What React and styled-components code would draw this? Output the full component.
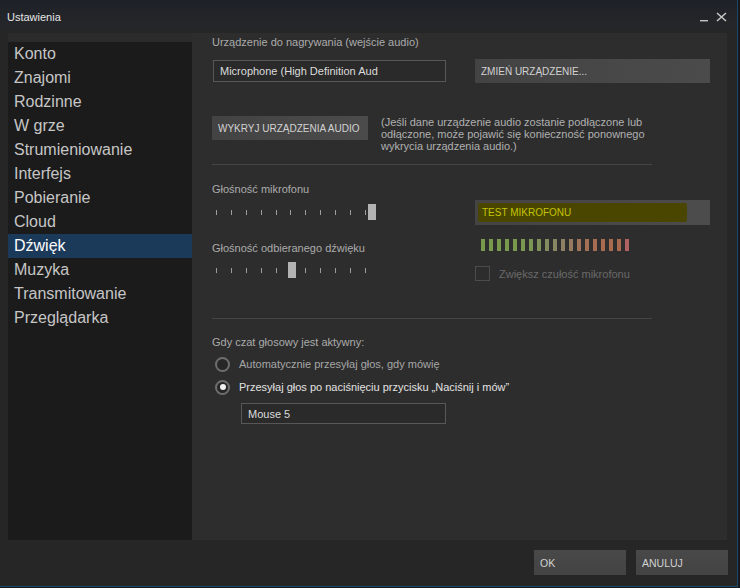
import React from "react";
import styled, { createGlobalStyle } from "styled-components";

const Global = createGlobalStyle`
  html, body { margin: 0; padding: 0; background: #15181d; }
  body { font-family: "Liberation Sans", Arial, sans-serif; }
`;

const Window = styled.div`
  width: 737px;
  height: 586px;
  background: #262626;
  border-right: 1px solid #1f4766;
  border-bottom: 1px solid #1f4766;
  display: flex;
  flex-direction: column;
`;

const TitleBar = styled.div`
  height: 33px;
  flex: none;
  display: flex;
  align-items: center;
  padding: 0 10px 0 7px;
  background: linear-gradient(#1e2127, #24262a 70%, #262626);
  color: #e6e6e6;
  font-size: 11px;
`;

const Title = styled.div`
  flex: 1;
`;

const Controls = styled.div`
  display: flex;
  align-items: flex-end;
  gap: 7px;
`;

const Body = styled.div`
  height: 507px;
  flex: none;
  display: flex;
  padding: 0 10px 0 8px;
`;

const Nav = styled.div`
  width: 184px;
  flex: none;
  background: #1b1b1b;
  border-top: 9px solid #2b2b2b;
`;

const NavItem = styled.div`
  height: 24px;
  line-height: 24px;
  padding-left: 6px;
  font-size: 16px;
  color: ${(p) => (p.$active ? "#ffffff" : "#c6c6c6")};
  background: ${(p) => (p.$active ? "#1b3a5a" : "transparent")};
`;

const Content = styled.div`
  flex: 1;
  background: #2d2d2d;
  padding: 2px 0 0 20px;
  color: #ababab;
  font-size: 11px;
`;

const Label = styled.div`
  line-height: 14px;
  margin-top: ${(p) => p.$mt || 0}px;
  color: ${(p) => p.$color || "#ababab"};
`;

const TwoCols = styled.div`
  display: grid;
  grid-template-columns: 263px 235px;
  align-items: ${(p) => p.$align || "center"};
  margin-top: ${(p) => p.$mt || 0}px;
`;

const TextBox = styled.div`
  box-sizing: border-box;
  width: ${(p) => p.$w}px;
  height: ${(p) => p.$h || 22}px;
  margin-left: ${(p) => p.$ml || 0}px;
  margin-top: ${(p) => p.$mt || 0}px;
  border: 1px solid #575757;
  background: #2a2a2a;
  color: #dcdcdc;
  font-size: 11px;
  display: flex;
  align-items: center;
  padding-left: 6px;
  white-space: nowrap;
  overflow: hidden;
`;

const Button = styled.div`
  box-sizing: border-box;
  width: ${(p) => p.$w}px;
  height: ${(p) => p.$h || 24}px;
  background: linear-gradient(to right, #434343, #4b4b4b);
  color: #d2d2d2;
  font-size: 10px;
  display: flex;
  align-items: center;
  padding-left: 6px;
  white-space: nowrap;
  flex: none;
`;

const DetectRow = styled.div`
  display: flex;
  align-items: flex-start;
  margin-top: 33px;
`;

const Note = styled.div`
  margin-left: 13px;
  width: 300px;
  line-height: 12px;
  color: #b0b0b0;
`;

const Divider = styled.div`
  width: 440px;
  height: 1px;
  background: #444444;
  margin-top: ${(p) => p.$mt}px;
`;

const Column = styled.div`
  display: flex;
  flex-direction: column;
  padding-top: ${(p) => p.$pt || 0}px;
`;

const SliderWrap = styled.div`
  position: relative;
  width: 170px;
  height: 16px;
  margin-top: ${(p) => p.$mt || 0}px;
  display: flex;
  align-items: center;
`;

const Ticks = styled.div`
  margin-left: 4px;
  width: 150px;
  display: flex;
  justify-content: space-between;
  align-items: center;
`;

const Tick = styled.div`
  width: 1px;
  height: 5px;
  background: #9c9c9c;
`;

const Handle = styled.div`
  position: absolute;
  top: 0;
  width: 8px;
  height: 16px;
  background: #b3b3b3;
`;

const TestButton = styled(Button)`
  height: 25px;
  padding-left: 3px;
  background: linear-gradient(to right, #444444, #4c4c4c);
`;

const Highlight = styled.span`
  display: flex;
  align-items: center;
  width: 209px;
  height: 19px;
  padding-left: 4px;
  box-sizing: border-box;
  background: #4a4600;
  color: #c4c300;
  border-radius: 2px;
`;

const Meter = styled.div`
  display: flex;
  gap: 4px;
  margin: 14px 0 0 6px;
`;

const Bar = styled.div`
  width: 4px;
  height: 12px;
  background: ${(p) => p.$c};
`;

const CheckRow = styled.div`
  display: flex;
  align-items: center;
  margin-top: 15px;
  color: #6a6a6a;
`;

const CheckBox = styled.div`
  box-sizing: border-box;
  width: 15px;
  height: 15px;
  border: 1px solid #4c4c4c;
  margin-right: 9px;
`;

const RadioRow = styled.div`
  display: flex;
  align-items: center;
  height: 16px;
  margin-top: 7px;
  padding-left: 3px;
  color: ${(p) => (p.$on ? "#e2e2e2" : "#a6a6a6")};
`;

const Radio = styled.div`
  box-sizing: border-box;
  width: 15px;
  height: 15px;
  border-radius: 50%;
  border: 2px solid #6e6e6e;
  background: #272727;
  margin-right: 9px;
  display: flex;
  align-items: center;
  justify-content: center;
  &::after {
    content: "";
    display: ${(p) => (p.$on ? "block" : "none")};
    width: 6px;
    height: 6px;
    border-radius: 50%;
    background: #f2f2f2;
  }
`;

const Footer = styled.div`
  flex: 1;
  display: flex;
  justify-content: flex-end;
  gap: 10px;
  padding: 10px 9px 0 0;
`;

const FooterButton = styled(Button)`
  height: 25px;
  font-size: 10.5px;
  padding-left: 6px;
  background: linear-gradient(#494949, #434343);
`;

const navItems = [
  "Konto", "Znajomi", "Rodzinne", "W grze", "Strumieniowanie", "Interfejs",
  "Pobieranie", "Cloud", "Dźwięk", "Muzyka", "Transmitowanie", "Przeglądarka",
];

const meterColors = [
  "#799a4c", "#799a4c", "#799a4c", "#799a4c", "#799a4c", "#7a984f", "#7c9553",
  "#7f9158", "#838c5e", "#878663", "#8d8064", "#967a60", "#9e735a", "#a37056",
  "#a66d52", "#a86b4f", "#a96a4e", "#aa694e", "#b06262",
];

function Slider({ value, mt }) {
  return (
    <SliderWrap $mt={mt}>
      <Ticks>
        {Array.from({ length: 11 }).map((_, i) => (
          <Tick key={i} />
        ))}
      </Ticks>
      <Handle style={{ left: value }} />
    </SliderWrap>
  );
}

export default function App() {
  return (
    <>
      <Global />
      <Window>
        <TitleBar>
          <Title>Ustawienia</Title>
          <Controls>
            <svg width="9" height="10" viewBox="0 0 9 10">
              <rect x="0" y="8" width="8" height="1.4" fill="#c4c4c4" />
            </svg>
            <svg width="11" height="10" viewBox="0 0 11 10">
              <path d="M1 1 L10 9 M10 1 L1 9" stroke="#c8c8c8" strokeWidth="1.5" fill="none" />
            </svg>
          </Controls>
        </TitleBar>
        <Body>
          <Nav>
            {navItems.map((n) => (
              <NavItem key={n} $active={n === "Dźwięk"}>{n}</NavItem>
            ))}
          </Nav>
          <Content>
            <Label>Urządzenie do nagrywania (wejście audio)</Label>
            <TwoCols $mt={10}>
              <TextBox $w={233} $ml={1}>Microphone (High Definition Aud</TextBox>
              <Button $w={235}>ZMIEŃ URZĄDZENIE...</Button>
            </TwoCols>
            <DetectRow>
              <Button $w={156}>WYKRYJ URZĄDZENIA AUDIO</Button>
              <Note>
                (Jeśli dane urządzenie audio zostanie podłączone lub
                <br />
                odłączone, może pojawić się konieczność ponownego
                <br />
                wykrycia urządzenia audio.)
              </Note>
            </DetectRow>
            <Divider $mt={12} />
            <TwoCols $mt={17} $align="start">
              <Column>
                <Label>Głośność mikrofonu</Label>
                <Slider value={156} mt={8} />
                <Label $mt={21}>Głośność odbieranego dźwięku</Label>
                <Slider value={76} mt={7} />
              </Column>
              <Column $pt={18}>
                <TestButton $w={235}>
                  <Highlight>TEST MIKROFONU</Highlight>
                </TestButton>
                <Meter>
                  {meterColors.map((c, i) => (
                    <Bar key={i} $c={c} />
                  ))}
                </Meter>
                <CheckRow>
                  <CheckBox />
                  Zwiększ czułość mikrofonu
                </CheckRow>
              </Column>
            </TwoCols>
            <Divider $mt={37} />
            <Label $mt={16}>Gdy czat głosowy jest aktywny:</Label>
            <RadioRow>
              <Radio />
              Automatycznie przesyłaj głos, gdy mówię
            </RadioRow>
            <RadioRow $on>
              <Radio $on />
              Przesyłaj głos po naciśnięciu przycisku „Naciśnij i mów”
            </RadioRow>
            <TextBox $w={205} $h={21} $ml={29} $mt={8}>Mouse 5</TextBox>
          </Content>
        </Body>
        <Footer>
          <FooterButton $w={92}>OK</FooterButton>
          <FooterButton $w={92}>ANULUJ</FooterButton>
        </Footer>
      </Window>
    </>
  );
}
